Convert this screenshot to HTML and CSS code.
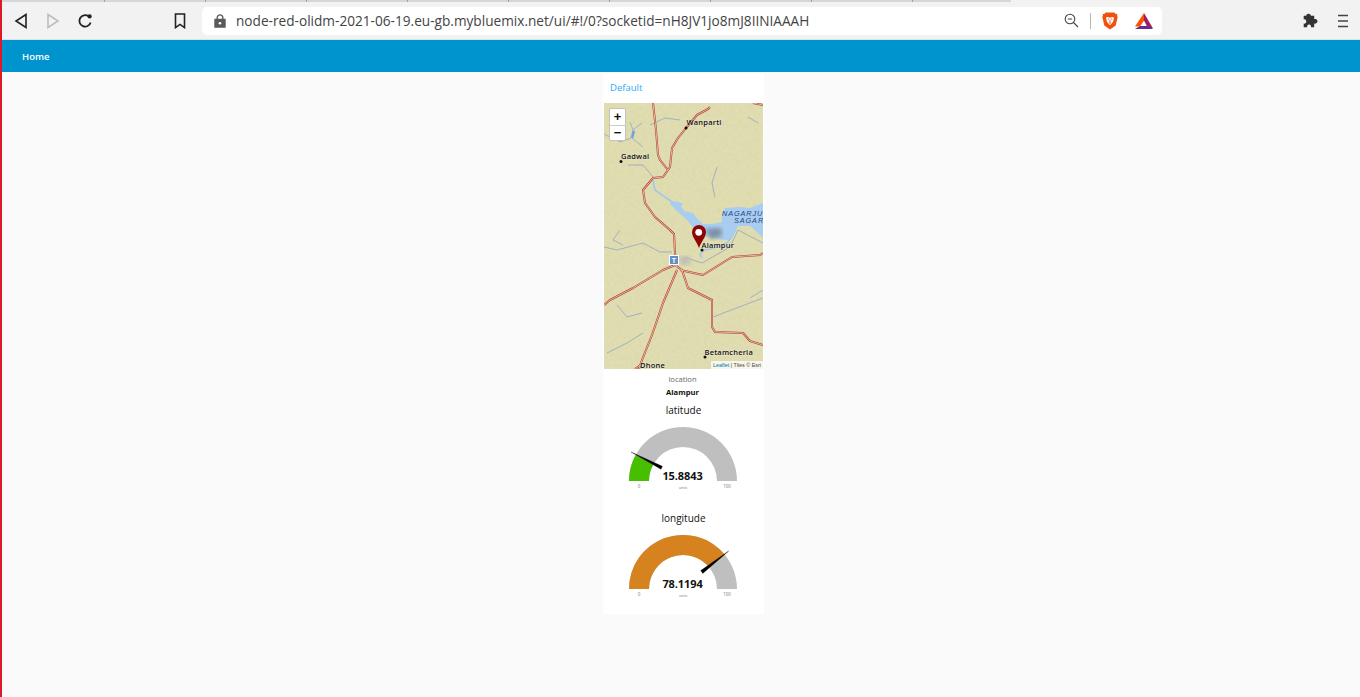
FILE: index.html
```html
<!DOCTYPE html>
<html lang="en">
<head>
<meta charset="utf-8">
<title>Node-RED Dashboard</title>
<link rel="stylesheet" href="styles.css">
</head>
<body>
<div class="window">
  <div class="tabstrip">
    <div class="tab tab-first"></div><div class="tab"></div><div class="tab"></div><div class="tab"></div><div class="tab"></div>
    <div class="tab"></div><div class="tab"></div><div class="tab"></div><div class="tab"></div><div class="tab tab-last"></div>
  </div>
  <header class="toolbar">
    <div class="tool"><svg width="14" height="18" viewBox="0 0 14 18"><path class="ic-line" d="M12 2.500 2 9l10 6.500z"/></svg></div>
    <div class="tool"><svg width="14" height="18" viewBox="0 0 14 18"><path class="ic-line ic-off" d="M2 2.500 12 9 2 15.500z"/></svg></div>
    <div class="tool"><svg width="16" height="16" viewBox="0 0 16 16"><path class="ic-line ic-bold" d="M13.600 9.400A5.700 5.700 0 1 1 11.600 3.400"/><circle class="ic-fill" cx="12.600" cy="3.400" r="2.100"/></svg></div>
    <div class="tool-spacer"></div>
    <div class="tool"><svg width="12" height="16" viewBox="0 0 12 16"><path class="ic-line" d="M1.500 1h9v13.600L6 11.400l-4.500 3.200z"/></svg></div>
    <div class="address">
      <svg class="lock" width="12" height="14" viewBox="0 0 12 14"><path class="ic-lock" d="M1 5.500h10V13H1z"/><path class="ic-shackle" d="M3.200 5.500V3.700a2.800 2.800 0 0 1 5.600 0v1.800"/><circle class="ic-dot" cx="6" cy="9.200" r="1.300"/></svg>
      <span class="url">node-red-olidm-2021-06-19.eu-gb.mybluemix.net/ui/#!/0?socketid=nH8JV1jo8mJ8IINIAAAH</span>
      <svg class="mag" width="15" height="15" viewBox="0 0 15 15"><circle class="ic-thin" cx="6" cy="6" r="4.800"/><path class="ic-thin" d="M3.800 6h4.400M9.500 9.500l4.500 4.500"/></svg>
      <span class="address-divider"></span>
      <svg class="brave" width="16" height="18" viewBox="0 0 16 18"><path class="brave-shield" d="M3.700.5h8.600l1.500 1.600 1.700-.1-.5 1.600.7 1.500-2 8.500L8 17.500l-5.700-3.900-2-8.500.7-1.500L.5 2l1.700.1z"/><path class="brave-face" d="M4 5.500 6 5l2 .8L10 5l2 .5-.8 4L9.300 12 8 13l-1.300-1-1.900-2.500z"/><path class="brave-eye" d="M5.800 7h1.300M8.900 7h1.300M8 8v2.400M6.800 11h2.400"/></svg>
      <svg class="bat" width="18" height="16" viewBox="0 0 18 16"><path class="bat-right" d="M9 0l9 15.500h-5L9 7.500z"/><path class="bat-left" d="M9 0v7.500L5 13.500H0z"/><path class="bat-base" d="M0 16l5-3h8l5 3z"/></svg>
    </div>
    <div class="tool-grow"></div>
    <div class="tool"><svg width="16" height="16" viewBox="0 0 16 16"><path class="puzzle" d="M5.500.8c1.500 0 2.300.9 2.300 2h3.400v3.300c1.400-.2 3.300.3 3.300 2.200s-1.900 2.500-3.300 2.300v3.600H8c.3-1.300-.4-2.700-2-2.700S3.800 13 4.200 14.200H.7v-3.600c1.300.3 2.600-.4 2.600-2.100S2 6.100.7 6.400V2.800h2.600C3.300 1.700 4 .8 5.500.8z"/></svg></div>
    <div class="tool"><svg width="12" height="14" viewBox="0 0 12 14"><path class="menu-lines" d="M1 1.500h10M1 7h10M1 12.500h10"/></svg></div>
  </header>
  <nav class="navbar"><span class="nav-title">Home</span></nav>
  <main class="content">
    <section class="card">
      <h2 class="group-title">Default</h2>
      <div class="map">
        <svg class="map-art" width="159" height="266" viewBox="604 103 159 266">
          <defs>
            <filter id="terrain" x="0" y="0" width="100%" height="100%">
              <feTurbulence type="fractalNoise" baseFrequency="0.28" numOctaves="2" seed="7"/>
              <feColorMatrix type="matrix" values="0 0 0 0 0.62  0 0 0 0 0.58  0 0 0 0 0.36  1.5 0 0 0 -0.55"/>
            </filter>
            <filter id="soft"><feGaussianBlur stdDeviation="2"/></filter>
            <path id="roads" d="M653 103 656 130 658 155 660 160 668 170M710 107 708 109 697 115 686 128 678 138 672 148 670 167 668 170 663 177 653 178 643 190 645 203 655 217 670 230 674 234 675 253 677 267M604 305 610 300 633 288 663 270 675 265M677 270 663 303 652 335 642 360 639 369M682 270 688 288 712 300 712 327 715 332 743 333 750 341 763 345M680 270 703 275 732 257 760 255 763 253M753 103 763 105M675 265 682 270M635 369 642 364"/>
          </defs>
          <rect class="land" x="604" y="103" width="159" height="266"/>
          <rect x="604" y="103" width="159" height="266" filter="url(#terrain)" opacity=".3"/>
          <path class="stream" d="M604 134 620 142 631 138 633 130 630 122M633 130 642 123M632 138 643 147M628 165 643 165 653 177M650 125 665 118 680 120M717 167 712 183 715 197M748 117 758 123M604 247 617 250 643 243 660 252 672 252M620 230 613 240 623 245M617 305 627 317 642 313M643 333 627 343 607 353M713 317 763 298M750 298 763 290M702 263 730 247 738 230 763 243M684 257 702 263"/>
          <path class="river" d="M653 180 655 190 672 202 682 205"/>
          <path class="river-wide" d="M632 138 634 131"/>
          <path class="lake" d="M672 201 683 203 681 206 684 211 693 213 696 217 703 224 712 224 722 222 722 214 725 208 740 207 750 208 763 203V238L757 232 750 226 738 226 735 233 731 240 726 240 712 238 705 236 695 230 688 221 678 212 670 204Z"/>
          <path class="river" d="M731 238 727 243 715 248 704 250 700 254 702 258"/>
          <path class="shade" filter="url(#soft)" d="M705 229 721 228 722 236 711 239z"/>
          <path class="town" filter="url(#soft)" d="M678 257 689 256 691 263 682 266z"/>
          <use class="road-case" href="#roads"/>
          <use class="road-core" href="#roads"/>
          <g class="shield"><rect x="669.500" y="255.500" width="9" height="9"/><text x="674" y="263">T</text></g>
          <circle class="place-dot" cx="686" cy="128" r="1.500"/>
          <circle class="place-dot" cx="621" cy="161.500" r="1.500"/>
          <circle class="place-dot" cx="702" cy="250" r="1.500"/>
          <circle class="place-dot" cx="705" cy="357" r="1.500"/>
          <text class="place" x="686.500" y="125">Wanparti</text>
          <text class="place" x="621" y="158.500">Gadwal</text>
          <text class="place" x="701.500" y="247.500">Alampur</text>
          <text class="place" x="704.500" y="354.500">Betamcherla</text>
          <text class="place" x="640" y="368">Dhone</text>
          <text class="lake-name" x="722" y="216">NAGARJU</text>
          <text class="lake-name" x="734" y="223">SAGAR</text>
          <path class="pin" d="M699 248C696.500 241 692 237 692 232A7 7 0 0 1 706 232C706 237 701.500 241 699 248Z"/>
          <circle class="pin-eye" cx="698.700" cy="232.300" r="3.400"/>
        </svg>
        <div class="zoom-control">
          <span class="zoom-btn">+</span>
          <span class="zoom-btn">&#8722;</span>
        </div>
        <div class="attribution"><span class="attr-link">Leaflet</span> | Tiles © Esri</div>
      </div>
      <div class="text-label">location</div>
      <div class="text-value">Alampur</div>
      <div class="gauge">
        <div class="gauge-title">latitude</div>
        <svg class="gauge-art" width="161" height="78" viewBox="603 417 161 78">
          <path class="arc-bg" d="M629 481A54 54 0 0 1 737 481H717A34 34 0 0 0 649 481Z"/>
          <path class="arc-low" d="M629 481A54 54 0 0 1 635.600 455.100L653.100 464.700A34 34 0 0 0 649 481Z"/>
          <path class="needle" d="M631 452 662.400 466.300 661 469.300Z"/>
          <text class="gauge-value" x="682.500" y="480">15.8843</text>
          <text class="gauge-tick" x="639" y="488">0</text>
          <text class="gauge-unit" x="683" y="489">units</text>
          <text class="gauge-tick" x="727" y="488">100</text>
        </svg>
      </div>
      <div class="gauge gauge-last">
        <div class="gauge-title">longitude</div>
        <svg class="gauge-art" width="161" height="78" viewBox="603 417 161 78">
          <path class="arc-bg" d="M629 481A54 54 0 0 1 737 481H717A34 34 0 0 0 649 481Z"/>
          <path class="arc-high" d="M629 481A54 54 0 0 1 724.800 446.700L709.300 459.400A34 34 0 0 0 649 481Z"/>
          <path class="needle" d="M728.700 443 702.800 465.400 700.700 462.600Z"/>
          <text class="gauge-value" x="682.500" y="480">78.1194</text>
          <text class="gauge-tick" x="639" y="488">0</text>
          <text class="gauge-unit" x="683" y="489">units</text>
          <text class="gauge-tick" x="727" y="488">100</text>
        </svg>
      </div>
    </section>
  </main>
</div>
</body>
</html>
```
FILE: styles.css
```css
* { box-sizing: border-box; }
html, body { margin: 0; height: 100%; overflow: hidden; }
body { background: #fafafa; font-family: "Open Sans", "Noto Sans", sans-serif; color: #111; }

.window { display: flex; flex-direction: column; height: 697px; border-left: 2px solid #dc1a2c; }

.tabstrip { display: flex; height: 2px; background: #f2f2f2; flex: none; }
.tab { width: 101px; background: #d5d8da; border-right: 1px solid #9aa0a4; }
.tab-first { width: 103px; }
.tab-last { width: 98px; border-right: 0; }

.toolbar { display: flex; align-items: center; height: 38px; flex: none; padding: 0 1px 0 3px; background: #f2f2f2; border-bottom: 1px solid #d4e3ec; }
.tool { width: 32px; display: flex; justify-content: center; align-items: center; flex: none; }
.tool-spacer { width: 63px; flex: none; }
.tool-grow { flex: 1; }
.ic-line { fill: none; stroke: #222; stroke-width: 1.6; }
.ic-bold { stroke-width: 1.8; }
.ic-off { stroke: #bdbdbd; }
.ic-fill { fill: #222; }
.ic-lock { fill: #5a5a5a; stroke: #5a5a5a; stroke-width: 1.4; }
.ic-shackle { fill: none; stroke: #5a5a5a; stroke-width: 1.4; }
.ic-dot { fill: #fff; }
.ic-thin { fill: none; stroke: #444; stroke-width: 1.1; }
.puzzle { fill: #333; }
.menu-lines { fill: none; stroke: #444; stroke-width: 1.6; }

.address { width: 960px; height: 28px; margin-left: 6px; display: flex; align-items: center; background: #fff; border-radius: 5px; padding-left: 12px; flex: none; }
.lock { flex: none; }
.url { margin-left: 10px; width: 827px; flex: none; font-size: 13.65px; color: #444; white-space: nowrap; }
.mag { margin-left: 1px; flex: none; }
.address-divider { width: 1px; height: 16px; background: #b5b5b5; margin-left: 11px; flex: none; }
.brave { margin-left: 11px; flex: none; }
.bat { margin-left: 17px; flex: none; }
.brave-shield { fill: #f1500f; }
.brave-face { fill: #fff; }
.brave-eye { fill: none; stroke: #f1500f; stroke-width: .9; }
.bat-right { fill: #9e1f63; }
.bat-left { fill: #ff5000; }
.bat-base { fill: #662d91; }

.navbar { height: 32px; flex: none; display: flex; align-items: center; padding-left: 20px; background: #0094ce; }
.nav-title { color: #fff; font-size: 9.5px; font-weight: 600; }

.content { flex: 1; display: flex; justify-content: center; align-items: flex-start; padding: 2px 0 0 5px; }
.card { width: 161px; height: 540px; background: #fff; display: flex; flex-direction: column; align-items: flex-start; }
.group-title { margin: 0; height: 29px; padding: 7px 0 0 7px; font-size: 9.5px; line-height: 14px; font-weight: 400; color: #2aaaf8; }

.map { position: relative; width: 159px; height: 266px; margin-left: 1px; overflow: hidden; flex: none; }
.map-art { display: block; }
.land { fill: #e0ddb1; }
.shade { fill: #6a7680; opacity: .7; }
.town { fill: #bdbdb5; }
.stream { fill: none; stroke: #7396cf; stroke-width: .6; }
.river { fill: none; stroke: #a2c7ea; stroke-width: 1.6; stroke-linejoin: round; }
.river-wide { fill: none; stroke: #6f9fdc; stroke-width: 2.4; }
.lake { fill: #a8cdf0; }
.road-case { fill: none; stroke: #b53a30; stroke-width: 2; stroke-linejoin: round; }
.road-core { fill: none; stroke: #ecd9b8; stroke-width: .8; stroke-linejoin: round; }
.shield rect { fill: #5f91c8; stroke: #fff; stroke-width: 1; }
.shield text { fill: #fff; font-family: "Liberation Sans", sans-serif; font-size: 7px; font-weight: 700; text-anchor: middle; }
.place-dot { fill: #111; }
.place { fill: #111; font-family: "Open Sans", sans-serif; font-size: 7.5px; font-weight: 600; letter-spacing: .2px; paint-order: stroke; stroke: rgba(255,255,255,.35); stroke-width: 1px; }
.lake-name { fill: #24457f; font-family: "Liberation Sans", sans-serif; font-size: 7.3px; font-style: italic; letter-spacing: .9px; }
.pin { fill: #8e0505; }
.pin-eye { fill: #fff; }

.zoom-control { position: absolute; left: 5px; top: 5px; width: 17px; height: 33px; background: #fff; border: 1px solid #c4c4b8; border-radius: 2px; display: flex; flex-direction: column; }
.zoom-btn { height: 15.5px; display: flex; align-items: center; justify-content: center; font-family: "Liberation Sans", sans-serif; font-size: 13px; font-weight: 700; color: #111; line-height: 1; }
.zoom-btn + .zoom-btn { border-top: 1px solid #ccc; }
.attribution { position: absolute; right: 0; bottom: 0; height: 8px; padding: 0 2px 0 2px; background: rgba(255,255,255,.75); font-family: "Liberation Sans", sans-serif; font-size: 5.4px; line-height: 8px; color: #444; white-space: nowrap; }
.attr-link { color: #0078a8; }

.text-label { width: 100%; margin-top: 4px; padding-right: 2px; text-align: center; font-size: 7.6px; line-height: 12px; color: #666; }
.text-value { width: 100%; margin-top: 1px; padding-right: 2px; text-align: center; font-size: 7.6px; line-height: 12px; font-weight: 700; color: #111; }

.gauge { width: 100%; margin-top: 5px; margin-bottom: 16px; }
.gauge-last { margin-top: 0; margin-bottom: 0; }
.gauge-title { text-align: center; font-size: 10px; line-height: 14px; color: #111; }
.gauge-art { display: block; }
.arc-bg { fill: #bfbfbf; }
.arc-low { fill: #46bf00; }
.arc-high { fill: #d6821e; }
.needle { fill: #000; stroke: #000; stroke-width: .3; }
.gauge-value { font-family: "Open Sans", sans-serif; font-size: 11px; letter-spacing: -.1px; font-weight: 700; fill: #111; text-anchor: middle; }
.gauge-tick { font-family: "Open Sans", sans-serif; font-size: 4.5px; fill: #777; text-anchor: middle; }
.gauge-unit { font-family: "Open Sans", sans-serif; font-size: 3.5px; fill: #777; text-anchor: middle; }
```
